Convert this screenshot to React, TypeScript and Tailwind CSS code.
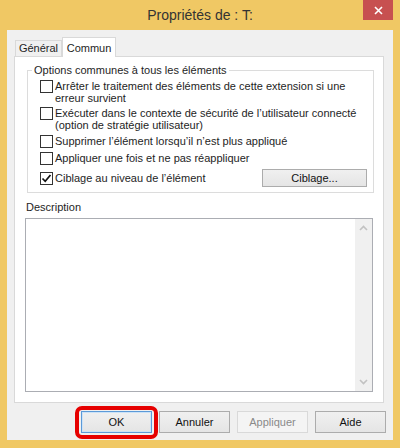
import React from "react";

const font = { fontFamily: '"Liberation Sans", Arial, sans-serif' };

function Checkbox({ checked }: { checked?: boolean }) {
  return (
    <div className="w-[13px] h-[13px] shrink-0 border border-[#333333] bg-white flex items-center justify-center">
      {checked && (
        <svg width="11" height="11" viewBox="0 0 11 11">
          <path d="M1.5 5.5 L4.2 8.3 L9.5 2" fill="none" stroke="#111" strokeWidth="1.7" />
        </svg>
      )}
    </div>
  );
}

function Option({ checked, children }: { checked?: boolean; children: React.ReactNode }) {
  return (
    <div className="flex items-start gap-[2px]">
      <Checkbox checked={checked} />
      <span className="leading-[12px] text-[#1e1e1e]">{children}</span>
    </div>
  );
}

function Button({ label, variant }: { label: string; variant?: "default" | "disabled" }) {
  const base = "w-[71px] h-[22px] flex items-center justify-center border text-[11px]";
  if (variant === "default")
    return (
      <div className={`${base} border-[#5c9ad8] bg-gradient-to-b from-[#f0f0f0] to-[#e5e5e5] text-[#111] shadow-[inset_0_0_0_1px_#cde3f7]`}>
        {label}
      </div>
    );
  if (variant === "disabled")
    return <div className={`${base} border-[#d9d9d9] bg-[#f4f4f4] text-[#8a8a8a]`}>{label}</div>;
  return (
    <div className={`${base} border-[#acacac] bg-gradient-to-b from-[#f0f0f0] to-[#e5e5e5] text-[#111]`}>{label}</div>
  );
}

export default function App() {
  return (
    <div className="w-[400px] h-[448px] bg-[#f0c864] flex flex-col text-[11px]" style={font}>
      {/* title bar */}
      <div className="relative h-[30px] flex items-center justify-center">
        <span className="text-[14px] text-[#333333] pt-[1px]">Propriétés de : T:</span>
        <div className="absolute right-[7px] top-0 w-[30px] h-[20px] bg-[#c75050] flex items-center justify-center">
          <svg width="9" height="9" viewBox="0 0 9 9">
            <path d="M1 1 L8 8 M8 1 L1 8" stroke="#fff" strokeWidth="1.6" />
          </svg>
        </div>
      </div>

      {/* body */}
      <div className="flex-1 mx-[7px] mb-[8px] bg-[#f0f0f0] pl-[7px] pr-[9px] pt-[7px] flex flex-col">
        {/* tabs */}
        <div className="flex items-end h-[19px]">
          <div className="ml-[1px] h-[16px] w-[47px] border border-b-0 border-[#d9d9d9] bg-[#f0f0f0] flex items-center justify-center text-[#1e1e1e]">
            Général
          </div>
          <div className="relative z-10 -mb-px h-[20px] w-[54px] border border-b-0 border-[#d9d9d9] bg-white flex items-start justify-center pt-[2px] text-[#1e1e1e]">
            Commun
          </div>
        </div>

        {/* panel */}
        <div className="h-[347px] border border-[#d9d9d9] bg-white pl-[10px] pr-[10px] pt-[6px] pb-[10px] flex flex-col">
          <fieldset className="ml-[2px] -mr-px border border-[#dcdcdc] p-0 m-0">
            <legend className="ml-[4px] px-[2px] leading-[14px] text-[#1e1e1e]">
              Options communes à tous les éléments
            </legend>
            <div className="pl-[12px] pr-[6px] pt-[3px] pb-[5px] flex flex-col">
              <Option>
                Arrêter le traitement des éléments de cette extension si une
                <br />
                erreur survient
              </Option>
              <div className="mt-[3px]">
                <Option>
                  Exécuter dans le contexte de sécurité de l’utilisateur connecté
                  <br />
                  (option de stratégie utilisateur)
                </Option>
              </div>
              <div className="mt-[4px]">
                <Option>Supprimer l’élément lorsqu’il n’est plus appliqué</Option>
              </div>
              <div className="mt-[4px]">
                <Option>Appliquer une fois et ne pas réappliquer</Option>
              </div>
              <div className="mt-[4px] h-[18px] flex items-center justify-between">
                <Option checked>Ciblage au niveau de l’élément</Option>
                <div className="w-[105px] h-[18px] border border-[#acacac] bg-gradient-to-b from-[#f0f0f0] to-[#e5e5e5] flex items-center justify-center text-[#111]">
                  Ciblage...
                </div>
              </div>
            </div>
          </fieldset>

          <div className="mt-[7px] ml-[1px] leading-[14px] text-[#1e1e1e]">Description</div>
          <div className="mt-[4px] flex-1 border border-[#abadb3] flex justify-end">
            <div className="w-[17px] bg-[#f0f0f0] flex flex-col justify-between items-center py-[6px]">
              <svg width="9" height="6" viewBox="0 0 9 6">
                <path d="M1 5 L4.5 1.5 L8 5" fill="none" stroke="#c2c2c2" strokeWidth="1.6" />
              </svg>
              <svg width="9" height="6" viewBox="0 0 9 6">
                <path d="M1 1 L4.5 4.5 L8 1" fill="none" stroke="#c2c2c2" strokeWidth="1.6" />
              </svg>
            </div>
          </div>
        </div>

        {/* buttons */}
        <div className="mt-[8px] -mr-[2px] flex justify-end gap-[7px]">
          <div className="relative">
            <div className="absolute -left-[6px] -right-[6px] -top-[5px] -bottom-[6px] border-[4px] border-[#e60000] rounded-[7px]" />
            <Button label="OK" variant="default" />
          </div>
          <Button label="Annuler" />
          <Button label="Appliquer" variant="disabled" />
          <Button label="Aide" />
        </div>
      </div>
    </div>
  );
}
